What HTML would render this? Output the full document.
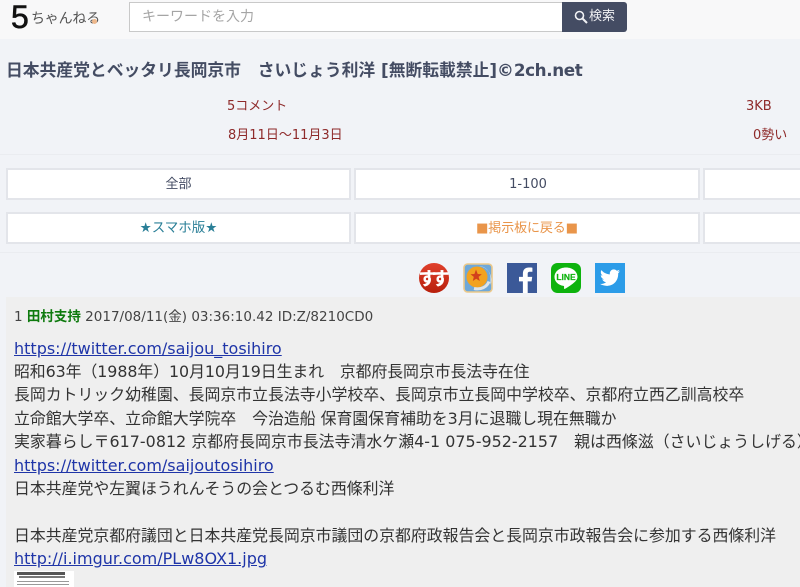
<!DOCTYPE html>
<html lang="ja">
<head>
<meta charset="utf-8">
<title>日本共産党とベッタリ長岡京市 さいじょう利洋</title>
<style>
html,body{margin:0;padding:0;width:800px;height:587px;overflow:hidden;background:#f1f3f7}
body{position:relative;font-family:"DejaVu Sans","Noto Sans CJK JP",sans-serif;color:#333}
.a{position:absolute;white-space:nowrap}
.hdr{left:0;top:0;width:800px;height:39px;background:#f8f8f9}
.input{left:129px;top:2px;width:433px;height:28px;background:#fff;border:1px solid #c9c9c9;border-right:0;font-size:14px;line-height:29px;color:#a5a5a5;text-indent:12px}
.btn{left:562px;top:2px;width:65px;height:30px;background:#444c63;border-radius:0 3px 3px 0;color:#f0f1f4;font-size:13px;line-height:30px}
.title{left:6px;top:58px;font-size:16.8px;line-height:25px;font-weight:bold;color:#444c63}
.red{font-size:13px;line-height:18px;color:#8e2a2a}
.b{box-sizing:border-box;height:32px;background:#fff;border:2px solid #e3e5ea;text-align:center;font-size:13px;line-height:29px;color:#444c63}
.post{left:6px;top:297px;width:794px;height:290px;background:#efefef}
.ln{left:14px;font-size:15.88px;line-height:24px;color:#333;width:786px;overflow:hidden}
.ln a{color:#1f35a8;text-decoration:underline;font-size:16px}
</style>
</head>
<body>
<div class="a hdr"></div>
<div class="a" style="left:11px;top:1px;font-family:'Liberation Sans','Noto Sans CJK JP',sans-serif;font-size:32px;line-height:32px;color:#111;-webkit-text-stroke:.6px #111">5</div>
<div class="a" style="left:31px;top:7px;font-size:14px;line-height:22px;letter-spacing:-.2px;color:#555;font-family:'WenQuanYi Zen Hei','Noto Sans CJK JP',sans-serif">ちゃんねる</div>
<div class="a" style="left:92px;top:19px;width:5px;height:5px;border-radius:50%;background:#eeb88c"></div>
<div class="a input">キーワードを入力</div>
<div class="a btn">
<svg style="position:absolute;left:12px;top:8px" width="14" height="14" viewBox="0 0 14 14"><circle cx="5.500" cy="5.500" r="4" fill="none" stroke="#f0f1f4" stroke-width="1.600"/><path d="M8.500 8.500L13 13" stroke="#f0f1f4" stroke-width="2"/></svg>
<span style="position:absolute;left:27px;top:0">検索</span>
</div>

<div class="a title">日本共産党とベッタリ長岡京市　さいじょう利洋 [無断転載禁止]©<span style="letter-spacing:-.4px">2ch.net</span></div>

<div class="a red" style="left:227px;top:98px">5コメント</div>
<div class="a red" style="left:746px;top:98px">3KB</div>
<div class="a red" style="left:228px;top:127px">8月11日～11月3日</div>
<div class="a red" style="left:753px;top:127px">0勢い</div>

<div class="a" style="left:0;top:154px;width:800px;height:1px;background:#eaecf0"></div>
<div class="a b" style="left:6px;top:168px;width:345px">全部</div>
<div class="a b" style="left:354px;top:168px;width:346px;text-indent:2px">1-100</div>
<div class="a b" style="left:703px;top:168px;width:110px"></div>
<div class="a b" style="left:6px;top:212px;width:345px;color:#2a7f97;font-size:13.500px">★スマホ版★</div>
<div class="a b" style="left:354px;top:212px;width:346px;color:#e9954a;letter-spacing:-.1px">■掲示板に戻る■</div>
<div class="a b" style="left:703px;top:212px;width:110px"></div>
<div class="a" style="left:0;top:252px;width:800px;height:1px;background:#eaecf0"></div>

<!-- icons -->
<svg class="a" style="left:419px;top:263px" width="30" height="30" viewBox="0 0 30 30">
<defs><linearGradient id="g" x1="0" y1="0" x2="0" y2="1"><stop offset="0" stop-color="#e0402c"/><stop offset="1" stop-color="#b8200c"/></linearGradient></defs>
<circle cx="15" cy="15" r="15" fill="url(#g)"/>
<text x="8.500" y="22" text-anchor="middle" font-family="Noto Sans CJK JP,sans-serif" font-size="18" font-weight="bold" fill="#fff" stroke="#fff" stroke-width=".3">す</text>
<text x="21.500" y="22" text-anchor="middle" font-family="Noto Sans CJK JP,sans-serif" font-size="18" font-weight="bold" fill="#fff" stroke="#fff" stroke-width=".3">す</text>
</svg>
<svg class="a" style="left:463px;top:263px" width="30" height="30" viewBox="0 0 30 30">
<rect x="1" y="1" width="28" height="28" rx="3.500" fill="#6fa8d8" stroke="#ecc98a" stroke-width="1.600"/>
<path d="M16 3A12 12 0 0 1 27.500 15V22A14 14 0 0 0 16 3Z" fill="#dfeaf2"/>
<circle cx="14" cy="14" r="10.500" fill="#f2a21f"/>
<path d="M13 6.500L14.700 11L18.800 11.200L15.600 13.900L16.800 18L13.200 15.700L9.800 18L10.800 13.900L7.500 11.200L11.400 11Z" fill="#d2401c"/>
<path d="M11 25.500C18 27 24 24 26 18.500" fill="none" stroke="#dfe4e6" stroke-width="3"/>
</svg>
<svg class="a" style="left:507px;top:263px" width="30" height="30" viewBox="0 0 30 30">
<rect width="30" height="30" fill="#3b5998"/>
<path d="M20.700 30V18.400H24.600L25.200 13.900H20.700V11C20.700 9.700 21.100 8.800 23 8.800H25.400V4.700C25 4.600 23.500 4.500 21.800 4.500C18.300 4.500 15.900 6.600 15.900 10.500V13.900H12V18.400H15.900V30Z" fill="#fff"/>
</svg>
<svg class="a" style="left:551px;top:263px" width="30" height="30" viewBox="0 0 30 30">
<rect width="30" height="30" rx="6.500" fill="#0eb30e"/>
<path d="M15 4.500C8.400 4.500 3.500 8.700 3.500 14C3.500 18.500 7 22 12.500 22.900C13.500 23.200 13 24.700 13 25.400C13 26.200 14 25.800 15 25.200C17.500 23.700 21 21.400 24 18.700C25.700 17 26.500 15.600 26.500 14C26.500 8.700 21.600 4.500 15 4.500Z" fill="#fff"/>
<text x="15" y="17" text-anchor="middle" font-family="Liberation Sans,sans-serif" font-size="8.500" font-weight="bold" fill="#0eb30e" stroke="#0eb30e" stroke-width=".2">LINE</text>
</svg>
<svg class="a" style="left:595px;top:263px" width="30" height="30" viewBox="0 0 30 30">
<rect width="30" height="30" fill="#2c9ce8"/>
<path d="M25 8.300C24.200 8.700 23.400 8.900 22.600 9C23.500 8.500 24.100 7.700 24.400 6.700C23.600 7.200 22.700 7.500 21.800 7.700C20.200 6 17.600 6 16 7.500C15 8.500 14.500 10 14.900 11.400C11.600 11.200 8.500 9.700 6.400 7.100C5.300 9 5.900 11.400 7.700 12.600C7 12.600 6.400 12.400 5.800 12.100C5.800 14.100 7.200 15.800 9.100 16.200C8.500 16.400 7.900 16.400 7.300 16.300C7.800 18 9.400 19.100 11.100 19.200C9.400 20.500 7.200 21.100 5 20.900C11.900 25.300 23.200 22.200 23.200 10.700V10.200C23.900 9.700 24.500 9 25 8.300Z" fill="#fff"/>
</svg>

<!-- post -->
<div class="a post"></div>
<div class="a" style="left:14px;top:308px;font-size:13.500px;line-height:18px;color:#444">1 <b style="color:#0e7a0e;font-weight:bold">田村支持</b> 2017/08/11(金) 03:36:10.42 ID:Z/8210CD0</div>

<div class="a ln" style="top:337px"><a>https://twitter.com/saijou_tosihiro</a></div>
<div class="a ln" style="top:360px;letter-spacing:-.07px">昭和63年（1988年）10月10月19日生まれ　京都府長岡京市長法寺在住</div>
<div class="a ln" style="top:383px">長岡カトリック幼稚園、長岡京市立長法寺小学校卒、長岡京市立長岡中学校卒、京都府立西乙訓高校卒</div>
<div class="a ln" style="top:407px">立命館大学卒、立命館大学院卒　今治造船 保育園保育補助を3月に退職し現在無職か</div>
<div class="a ln" style="top:430px;letter-spacing:.04px">実家暮らし〒617-0812 京都府長岡京市長法寺清水ケ瀬4-1 075-952-2157　親は西條滋（さいじょうしげる）</div>
<div class="a ln" style="top:454px"><a>https://twitter.com/saijoutosihiro</a></div>
<div class="a ln" style="top:477px">日本共産党や左翼ほうれんそうの会とつるむ西條利洋</div>
<div class="a ln" style="top:524px">日本共産党京都府議団と日本共産党長岡京市議団の京都府政報告会と長岡京市政報告会に参加する西條利洋</div>
<div class="a ln" style="top:547px"><a>http://i.imgur.com/PLw8OX1.jpg</a></div>

<div class="a" style="left:14px;top:571px;width:60px;height:16px;background:#fff"></div>
<div class="a" style="left:17px;top:572px;width:48px;height:3px;background:#555"></div>
<div class="a" style="left:19px;top:576px;width:46px;height:2px;background:#777"></div>
<div class="a" style="left:17px;top:581px;width:52px;height:1px;background:#999"></div>
<div class="a" style="left:17px;top:584px;width:52px;height:1px;background:#999"></div>
</body>
</html>
